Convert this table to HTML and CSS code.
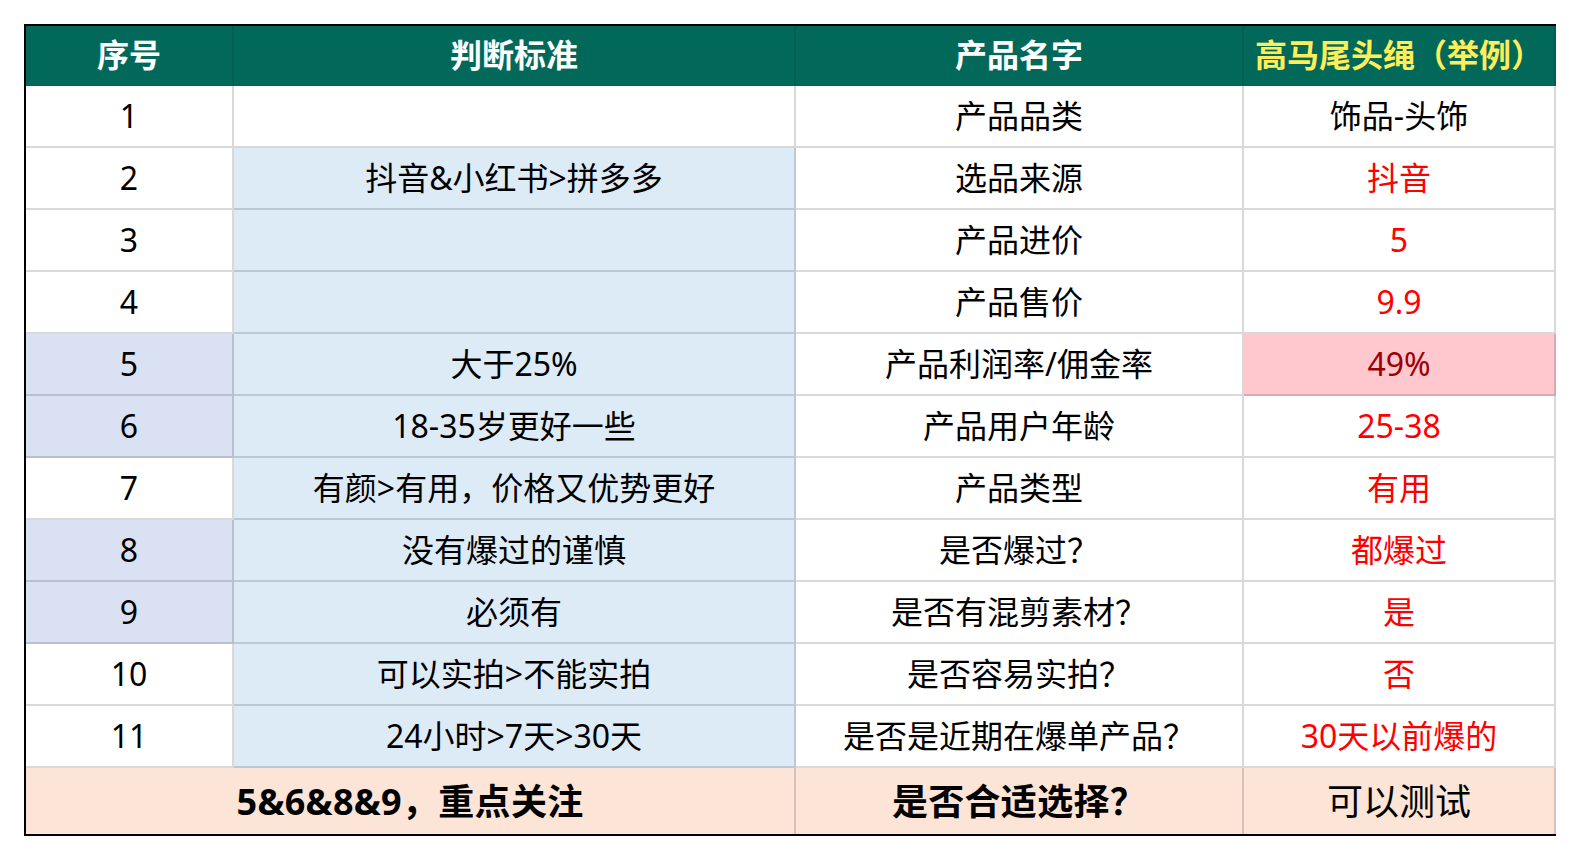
FILE: index.html
```html
<!DOCTYPE html>
<html lang="zh-CN">
<head>
<meta charset="utf-8">
<title>选品判断表</title>
<link rel="stylesheet" href="styles.css">
</head>
<body>
<table class="sheet">
  <colgroup>
    <col class="c-no">
    <col class="c-rule">
    <col class="c-name">
    <col class="c-ex">
  </colgroup>
  <thead>
    <tr class="head">
      <th>序号</th>
      <th>判断标准</th>
      <th>产品名字</th>
      <th class="yellow">高马尾头绳（举例）</th>
    </tr>
  </thead>
  <tbody>
    <tr><td>1</td><td></td><td>产品品类</td><td>饰品-头饰</td></tr>
    <tr><td>2</td><td class="blue">抖音&amp;小红书&gt;拼多多</td><td>选品来源</td><td class="red">抖音</td></tr>
    <tr><td>3</td><td class="blue"></td><td>产品进价</td><td class="red">5</td></tr>
    <tr><td>4</td><td class="blue"></td><td>产品售价</td><td class="red">9.9</td></tr>
    <tr><td class="lav">5</td><td class="blue">大于25%</td><td>产品利润率/佣金率</td><td class="bad">49%</td></tr>
    <tr><td class="lav">6</td><td class="blue">18-35岁更好一些</td><td>产品用户年龄</td><td class="red">25-38</td></tr>
    <tr><td>7</td><td class="blue">有颜&gt;有用，价格又优势更好</td><td>产品类型</td><td class="red">有用</td></tr>
    <tr><td class="lav">8</td><td class="blue">没有爆过的谨慎</td><td>是否爆过？</td><td class="red">都爆过</td></tr>
    <tr><td class="lav">9</td><td class="blue">必须有</td><td>是否有混剪素材？</td><td class="red">是</td></tr>
    <tr><td>10</td><td class="blue">可以实拍&gt;不能实拍</td><td>是否容易实拍？</td><td class="red">否</td></tr>
    <tr><td>11</td><td class="blue">24小时&gt;7天&gt;30天</td><td>是否是近期在爆单产品？</td><td class="red">30天以前爆的</td></tr>
  </tbody>
  <tfoot>
    <tr class="foot">
      <td colspan="2" class="strong">5&amp;6&amp;8&amp;9，重点关注</td>
      <td class="strong">是否合适选择？</td>
      <td>可以测试</td>
    </tr>
  </tfoot>
</table>
</body>
</html>
```

FILE: styles.css
```css
html, body {
  margin: 0;
  padding: 0;
  background: #ffffff;
}

body {
  font-family: "Noto Sans", "Noto Sans CJK SC", sans-serif;
  color: #000000;
}

.sheet {
  margin: 24px 0 0 24px;
  width: 1532px;
  table-layout: fixed;
  border-collapse: separate;
  border-spacing: 0;
  border-top: 2px solid #000000;
  border-left: 2px solid #000000;
  border-bottom: 2px solid #000000;
}

.c-no { width: 208px; }
.c-rule { width: 562px; }
.c-name { width: 448px; }
.c-ex { width: 312px; }

.sheet th,
.sheet td {
  box-sizing: border-box;
  padding: 0;
  text-align: center;
  vertical-align: middle;
  white-space: nowrap;
  line-height: 1;
  border-right: 2px solid rgba(0, 0, 0, 0.15);
  border-bottom: 2px solid rgba(0, 0, 0, 0.15);
  background-clip: border-box;
}

.head {
  height: 60px;
}

.head th {
  background: #02695a;
  color: #ffffff;
  font-size: 32px;
  font-weight: 700;
  border-bottom: 0;
  border-right-color: rgba(0, 0, 0, 0.1);
  padding-bottom: 2px;
}

.head th.yellow {
  color: #ffee58;
}

tbody tr {
  height: 62px;
}

tbody td {
  font-size: 32px;
  font-weight: 400;
  padding-top: 2px;
}

.blue { background: #ddebf7; }
.lav { background: #d9e1f2; }
.red { color: #ff0000; }
.bad {
  background: #ffc7ce;
  color: #9c0006;
}

.foot {
  height: 66px;
}

.foot td {
  background: #fce4d6;
  font-size: 36px;
  border-bottom: 0;
  padding-top: 2px;
}

.foot td.strong {
  font-weight: 700;
  letter-spacing: 0.3px;
}
```
